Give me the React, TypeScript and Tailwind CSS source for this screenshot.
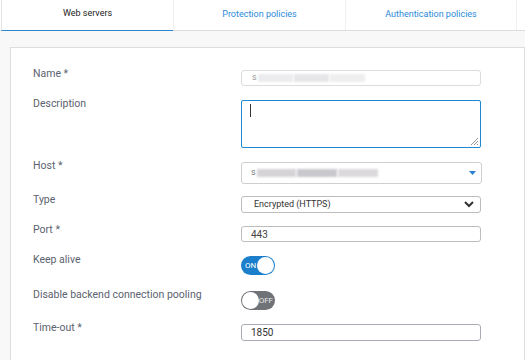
import React from "react";

function Blur({ w, dark }: { w: number; dark?: boolean }) {
  return (
    <div className="flex items-center gap-[1px] h-[8px]" style={{ width: w }}>
      <div className={`h-full flex-1 ${dark ? "bg-[#d6d3d6]" : "bg-[#ececee]"} blur-[1px]`} />
      <div className={`h-full flex-1 ${dark ? "bg-[#c9c8cc]" : "bg-[#e6e6e8]"} blur-[1px]`} />
      <div className={`h-full flex-1 ${dark ? "bg-[#dcd9dc]" : "bg-[#eeeeef]"} blur-[1px]`} />
    </div>
  );
}

function Row({ label, h, children }: { label: string; h: string; children?: React.ReactNode }) {
  return (
    <div className={`flex items-start ${h}`}>
      <div className="w-[208px] -mt-[3px] text-[10.5px] leading-[14px] text-[#5c6270]">{label}</div>
      <div className="flex-1">{children}</div>
    </div>
  );
}

export default function App() {
  return (
    <div
      className="w-[525px] h-[360px] overflow-hidden bg-[#f8f8f8]"
      style={{ fontFamily: "Roboto, 'Liberation Sans', sans-serif" }}
    >
      <div className="flex h-[31px] bg-white border-b border-[#dcdcdc] pl-[1px]">
        <div className="w-[172px] flex items-center justify-center border-b border-[#2f86cc] border-l border-l-[#e4e4e4] text-[9px] text-[#222] -mb-[1px] pb-[3px]">
          Web servers
        </div>
        <div className="w-[172px] flex items-center justify-center border-l border-[#f0f0f0] text-[9px] text-[#2b8ad8]">
          Protection policies
        </div>
        <div className="w-[172px] flex items-center justify-center border-l border-r border-[#f0f0f0] text-[9px] text-[#2b8ad8]">
          Authentication policies
        </div>
        <div className="flex-1" />
      </div>

      <div className="ml-[10px] mt-[16px] bg-white border border-[#dddddd] h-[400px] pl-[22px] pt-[22px]">
        <Row label="Name *" h="h-[30px]">
          <div className="w-[240px] h-[16px] border border-[#dcdcdc] rounded-[3px] flex items-center pl-[10px] gap-[1px]">
            <span className="text-[9px] text-[#999]">s</span>
            <Blur w={107} />
          </div>
        </Row>
        <Row label="Description" h="h-[62px]">
          <div className="relative w-[240px] h-[48px] border border-[#1e88d0] rounded-[2px] bg-white">
            <div className="absolute left-[8px] top-[3px] w-[1px] h-[13px] bg-[#333]" />
            <svg className="absolute right-[1px] bottom-[1px]" width="9" height="9" viewBox="0 0 9 9">
              <path d="M8 1 L1 8 M8 4 L4 8 M8 7 L7 8" stroke="#777" strokeWidth="0.8" />
            </svg>
          </div>
        </Row>
        <Row label="Host *" h="h-[34px]">
          <div className="relative w-[241px] h-[22px] border border-[#cfcfcf] rounded-[3px] flex items-center pl-[9px] gap-[1px]">
            <span className="text-[9px] text-[#777]">s</span>
            <Blur w={121} dark />
            <svg className="absolute right-[5px] top-[8px]" width="7" height="5" viewBox="0 0 7 5">
              <path d="M0 0 L7 0 L3.5 4 Z" fill="#2a7fcf" />
            </svg>
          </div>
        </Row>
        <Row label="Type" h="h-[30px]">
          <div className="relative w-[240px] h-[17px] border border-[#bdbdbd] rounded-[3px] flex items-center pl-[12px] text-[9px] text-[#333]">
            Encrypted (HTTPS)
            <svg className="absolute right-[6px] top-[4px]" width="10" height="7" viewBox="0 0 10 7">
              <path d="M1 1 L5 5 L9 1" stroke="#333" strokeWidth="2" fill="none" />
            </svg>
          </div>
        </Row>
        <Row label="Port *" h="h-[30px]">
          <div className="w-[240px] h-[16px] border border-[#bdbdbd] rounded-[3px] flex items-center pl-[9px] text-[10px] text-[#444]">
            443
          </div>
        </Row>
        <Row label="Keep alive" h="h-[35px]">
          <div className="w-[34px] h-[19px] rounded-full bg-[#1b7fcc] flex items-center justify-between pl-[4px] pr-[1px]">
            <span className="text-[8px] text-white leading-none">ON</span>
            <div className="w-[17px] h-[17px] rounded-full bg-white" />
          </div>
        </Row>
        <Row label="Disable backend connection pooling" h="h-[33px]">
          <div className="w-[34px] h-[19px] rounded-full bg-[#6f7277] flex items-center justify-between pl-[1px] pr-[2px]">
            <div className="w-[17px] h-[17px] rounded-full bg-white" />
            <span className="text-[8px] text-[#e8e8e8] leading-none">OFF</span>
          </div>
        </Row>
        <Row label="Time-out *" h="h-[30px]">
          <div className="w-[240px] h-[17px] border border-[#a9adb3] rounded-[3px] flex items-center pl-[9px] text-[10px] text-[#333]">
            1850
          </div>
        </Row>
      </div>
    </div>
  );
}
